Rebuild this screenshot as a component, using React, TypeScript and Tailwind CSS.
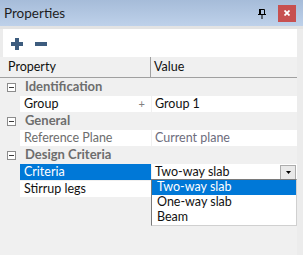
import React from "react";

type Row =
  | { kind: "cat"; label: string }
  | { kind: "prop"; label: string; value?: string; dim?: boolean; plus?: boolean; selected?: boolean; combo?: boolean };

const rows: Row[] = [
  { kind: "cat", label: "Identification" },
  { kind: "prop", label: "Group", value: "Group 1", plus: true },
  { kind: "cat", label: "General" },
  { kind: "prop", label: "Reference Plane", value: "Current plane", dim: true },
  { kind: "cat", label: "Design Criteria" },
  { kind: "prop", label: "Criteria", value: "Two-way slab", selected: true, combo: true },
  { kind: "prop", label: "Stirrup legs" },
];

const options = ["Two-way slab", "One-way slab", "Beam"];

function MinusBox() {
  return (
    <span className="w-[9px] h-[9px] border border-[#8c8c8c] bg-white flex items-center justify-center">
      <span className="w-[5px] h-px bg-[#3c3c3c]" />
    </span>
  );
}

function PinIcon() {
  return (
    <svg width="8" height="10" viewBox="0 0 8 10" className="block">
      <path d="M1.5 0.5h5v5h-5z" fill="none" stroke="#000" />
      <rect x="1" y="0" width="2" height="6" fill="#000" />
      <rect x="0" y="5" width="8" height="1" fill="#000" />
      <rect x="3.5" y="6" width="1" height="4" fill="#000" />
    </svg>
  );
}

export default function App() {
  return (
    <div
      className="w-[303px] h-[255px] overflow-hidden bg-[#eeeeee] flex flex-col text-[12.5px] text-[#111]"
      style={{ fontFamily: "Lato, 'Liberation Sans', sans-serif" }}
    >
      {/* title bar */}
      <div className="h-[26px] shrink-0 bg-gradient-to-b from-[#a6bcd9] to-[#bed1ea] flex items-center pl-[4px] pr-[7px]">
        <span className="text-[13.5px] text-[#1e1e1e] flex-1">Properties</span>
        <span className="mr-[12px] mt-[1px]">
          <PinIcon />
        </span>
        <span className="w-[18px] h-[17px] bg-[#c75050] flex items-center justify-center">
          <svg width="6" height="6" viewBox="0 0 6 6">
            <path d="M0.5 0.5l5 5M5.5 0.5l-5 5" stroke="#fff" strokeWidth="1.8" />
          </svg>
        </span>
      </div>

      <div className="flex-1 flex flex-col border-t-[3px] border-[#e3e3e3] pl-[3px] pr-[6px] bg-[#ececec]">
        {/* toolbar */}
        <div className="h-[28px] shrink-0 bg-white flex items-center gap-[12px] pl-[8px] pt-px">
          <svg width="12" height="12" viewBox="0 0 12 12">
            <rect x="4" y="0" width="4" height="12" fill="#3d5c7e" />
            <rect x="0" y="4" width="12" height="4" fill="#3d5c7e" />
          </svg>
          <svg width="12" height="12" viewBox="0 0 12 12">
            <rect x="0" y="4" width="12" height="4" fill="#3d5c7e" />
          </svg>
        </div>

        {/* grid */}
        <div className="flex-1 -ml-[3px] bg-[#f0f0f0] relative">
          <div className="h-[21px] flex border-b border-[#a0a0a0]">
            <div className="w-[151px] pl-[8px] flex items-center border-r border-[#a0a0a0]">Property</div>
            <div className="flex-1 pl-[3px] flex items-center">Value</div>
          </div>
          <div className="flex flex-col gap-px pt-px">
            {rows.map((r, i) =>
              r.kind === "cat" ? (
                <div key={i} className="h-[16px] flex items-center">
                  <div className="w-[25px] pl-[7px] flex items-center">
                    <MinusBox />
                  </div>
                  <span className="font-bold text-[#6d6d6d] text-[13px]">{r.label}</span>
                </div>
              ) : (
                <div key={i} className="h-[16px] flex">
                  <div className="w-[20px]" />
                  <div
                    className={`w-[131px] flex items-center pl-[4px] pr-[6px] ${
                      r.selected ? "bg-[#0078d7] text-white" : "bg-white"
                    } ${r.dim ? "text-[#6d6d6d]" : ""}`}
                  >
                    <span className="flex-1">{r.label}</span>
                    {r.plus && <span className="text-[#808080] text-[11px]">+</span>}
                  </div>
                  <div className={`flex-1 ml-px bg-white flex items-center pl-[3px] ${r.dim ? "text-[#6d6d7d]" : ""}`}>
                    <span className="flex-1">{r.value}</span>
                    {r.combo && (
                      <span className="w-[16px] h-[15px] mr-px border border-[#acacac] bg-[#e9e9e9] flex items-center justify-center">
                        <svg width="5" height="3" viewBox="0 0 5 3">
                          <path d="M0 0h5L2.5 3z" fill="#000" />
                        </svg>
                      </span>
                    )}
                  </div>
                </div>
              )
            )}
          </div>

          {/* dropdown list */}
          <div className="absolute left-[151px] top-[122px] w-[146px] bg-white border border-[#7a7a7a] border-r-[#d0d0d0] border-b-[#d0d0d0] flex flex-col">
            {options.map((o, i) => (
              <div
                key={o}
                className={`h-[15px] flex items-center pl-[5px] ${i === 0 ? "bg-[#0078d7] text-white" : ""}`}
              >
                {o}
              </div>
            ))}
          </div>
        </div>
      </div>
    </div>
  );
}
